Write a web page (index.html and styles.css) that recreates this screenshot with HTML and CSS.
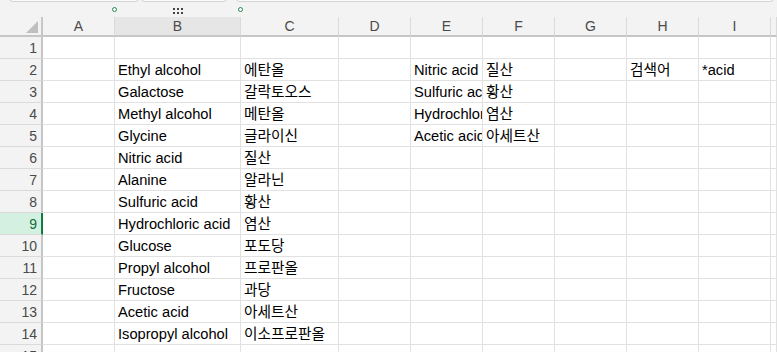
FILE: index.html
```html
<!DOCTYPE html>
<html lang="ko">
<head>
<meta charset="utf-8">
<link rel="stylesheet" href="styles.css">
</head>
<body>
<div class="topbar">
  <div class="tabs">
    <div class="tab t1"></div>
    <div class="tab t2"></div>
    <div class="tab t3"></div>
  </div>
  <span class="handle h1"></span>
  <span class="handle h2"></span>
  <span class="grip"><i></i><i></i><i></i><i></i><i></i><i></i></span>
</div>
<div class="sheet">
  <div class="corner"><span class="tri"></span></div>
  <div class="ch">A</div><div class="ch sel">B</div><div class="ch">C</div><div class="ch">D</div><div class="ch">E</div><div class="ch">F</div><div class="ch">G</div><div class="ch">H</div><div class="ch">I</div><div class="ch"></div>

  <div class="rh">1</div><div class="c"></div><div class="c"></div><div class="c"></div><div class="c"></div><div class="c"></div><div class="c"></div><div class="c"></div><div class="c"></div><div class="c"></div><div class="c"></div>

  <div class="rh">2</div><div class="c"></div><div class="c">Ethyl alcohol</div><div class="c">에탄올</div><div class="c"></div><div class="c">Nitric acid</div><div class="c">질산</div><div class="c"></div><div class="c">검색어</div><div class="c">*acid</div><div class="c"></div>

  <div class="rh">3</div><div class="c"></div><div class="c">Galactose</div><div class="c">갈락토오스</div><div class="c"></div><div class="c">Sulfuric acid</div><div class="c">황산</div><div class="c"></div><div class="c"></div><div class="c"></div><div class="c"></div>

  <div class="rh">4</div><div class="c"></div><div class="c">Methyl alcohol</div><div class="c">메탄올</div><div class="c"></div><div class="c">Hydrochloric acid</div><div class="c">염산</div><div class="c"></div><div class="c"></div><div class="c"></div><div class="c"></div>

  <div class="rh">5</div><div class="c"></div><div class="c">Glycine</div><div class="c">글라이신</div><div class="c"></div><div class="c">Acetic acid</div><div class="c">아세트산</div><div class="c"></div><div class="c"></div><div class="c"></div><div class="c"></div>

  <div class="rh">6</div><div class="c"></div><div class="c">Nitric acid</div><div class="c">질산</div><div class="c"></div><div class="c"></div><div class="c"></div><div class="c"></div><div class="c"></div><div class="c"></div><div class="c"></div>

  <div class="rh">7</div><div class="c"></div><div class="c">Alanine</div><div class="c">알라닌</div><div class="c"></div><div class="c"></div><div class="c"></div><div class="c"></div><div class="c"></div><div class="c"></div><div class="c"></div>

  <div class="rh">8</div><div class="c"></div><div class="c">Sulfuric acid</div><div class="c">황산</div><div class="c"></div><div class="c"></div><div class="c"></div><div class="c"></div><div class="c"></div><div class="c"></div><div class="c"></div>

  <div class="rh active">9</div><div class="c"></div><div class="c">Hydrochloric acid</div><div class="c">염산</div><div class="c"></div><div class="c"></div><div class="c"></div><div class="c"></div><div class="c"></div><div class="c"></div><div class="c"></div>

  <div class="rh">10</div><div class="c"></div><div class="c">Glucose</div><div class="c">포도당</div><div class="c"></div><div class="c"></div><div class="c"></div><div class="c"></div><div class="c"></div><div class="c"></div><div class="c"></div>

  <div class="rh">11</div><div class="c"></div><div class="c">Propyl alcohol</div><div class="c">프로판올</div><div class="c"></div><div class="c"></div><div class="c"></div><div class="c"></div><div class="c"></div><div class="c"></div><div class="c"></div>

  <div class="rh">12</div><div class="c"></div><div class="c">Fructose</div><div class="c">과당</div><div class="c"></div><div class="c"></div><div class="c"></div><div class="c"></div><div class="c"></div><div class="c"></div><div class="c"></div>

  <div class="rh">13</div><div class="c"></div><div class="c">Acetic acid</div><div class="c">아세트산</div><div class="c"></div><div class="c"></div><div class="c"></div><div class="c"></div><div class="c"></div><div class="c"></div><div class="c"></div>

  <div class="rh">14</div><div class="c"></div><div class="c">Isopropyl alcohol</div><div class="c">이소프로판올</div><div class="c"></div><div class="c"></div><div class="c"></div><div class="c"></div><div class="c"></div><div class="c"></div><div class="c"></div>

  <div class="rh">15</div><div class="c"></div><div class="c"></div><div class="c"></div><div class="c"></div><div class="c"></div><div class="c"></div><div class="c"></div><div class="c"></div><div class="c"></div><div class="c"></div>
</div>
</body>
</html>
```
FILE: styles.css
```css
html, body {
  margin: 0;
  padding: 0;
  background: #ffffff;
  overflow: hidden;
  width: 777px;
  height: 352px;
}
body {
  font-family: "Liberation Sans", "Noto Sans CJK KR", sans-serif;
  font-size: 14.67px;
  color: #000;
}
.topbar {
  position: relative;
  height: 17px;
  background: #f3f3f3;
  overflow: hidden;
}
.tabs {
  display: flex;
  margin-top: -10px;
  padding-left: 9px;
}
.tab {
  height: 12px;
  box-sizing: border-box;
  background: #fafafa;
  border: 1px solid #d4d4d4;
  border-top: none;
  border-radius: 0 0 4px 4px;
}
.t1 { width: 130px; }
.t2 { width: 86px; margin-left: 2px; }
.t3 { width: 538px; margin-left: 9px; }
.handle {
  position: absolute;
  top: 7px;
  width: 5px;
  height: 5px;
  box-sizing: border-box;
  border: 1px solid #1e8a4c;
  border-radius: 50%;
  background: #fff;
}
.h1 { left: 112px; }
.h2 { left: 238px; }
.grip {
  position: absolute;
  top: 8px;
  left: 173px;
  display: grid;
  grid-template-columns: repeat(3, 2px);
  grid-auto-rows: 2px;
  gap: 2px 2px;
}
.grip i {
  display: block;
  width: 2px;
  height: 2px;
  background: #444;
}
.sheet {
  display: grid;
  grid-template-columns: 43px 72px 126px 98px 72px 72px 72px 72px 72px 72px 1fr;
  grid-template-rows: 20px;
  grid-auto-rows: 22px;
}
.corner, .ch, .rh, .c {
  box-sizing: border-box;
  overflow: hidden;
  white-space: nowrap;
}
.corner {
  position: relative;
  background: #f3f3f3;
  border-right: 2px solid #c6c6c6;
  border-bottom: 2px solid #c6c6c6;
}
.tri {
  position: absolute;
  right: 3px;
  bottom: 2px;
  width: 0;
  height: 0;
  border-left: 12px solid transparent;
  border-bottom: 12px solid #bfbfbf;
}
.ch {
  background: #f3f3f3;
  border-right: 1px solid #dadada;
  border-bottom: 2px solid #c6c6c6;
  text-align: center;
  font-size: 14px;
  line-height: 18px;
  color: #4a4a4a;
}
.ch.sel {
  background: #e6e6e6;
}
.rh {
  background: #f3f3f3;
  border-right: 2px solid #c6c6c6;
  border-bottom: 1px solid #dadada;
  text-align: right;
  padding-right: 4px;
  font-size: 14px;
  line-height: 22px;
  color: #4a4a4a;
}
.rh.active {
  background: #d3f0e0;
  border-right-color: #107c41;
  color: #0f703b;
}
.c {
  border-right: 1px solid #e1e1e1;
  border-bottom: 1px solid #e1e1e1;
  padding-left: 3px;
  line-height: 22px;
}
```
